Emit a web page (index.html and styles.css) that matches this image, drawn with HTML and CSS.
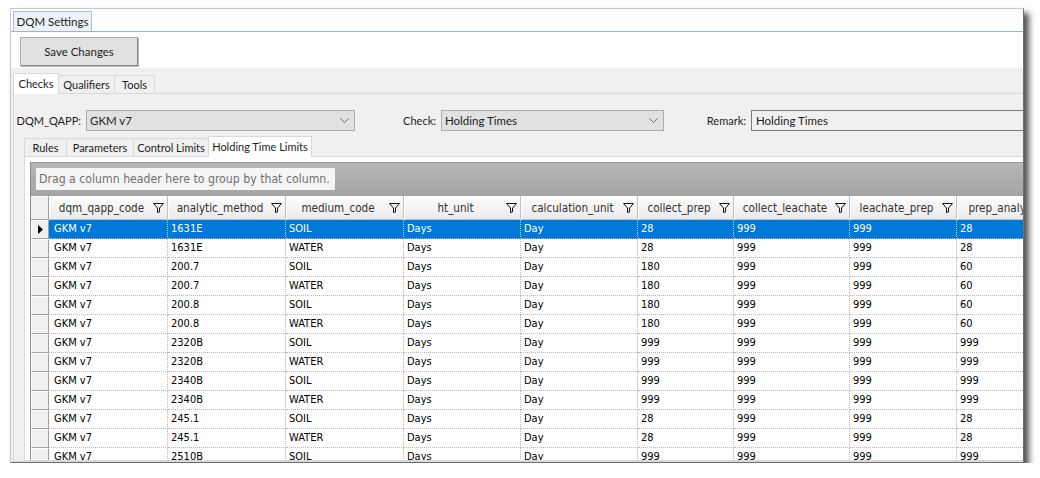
FILE: index.html
```html
<!DOCTYPE html>
<html>
<head>
<meta charset="utf-8">
<link rel="stylesheet" href="styles.css">
</head>
<body>
<div class="window">
  <div class="doc-strip"><div class="doc-tab">DQM Settings</div></div>
  <div class="toolbar"><button class="btn">Save Changes</button></div>
  <div class="main">
    <div class="tabs outer-tabs">
      <div class="tab sel w-checks">Checks</div>
      <div class="tab w-qual">Qualifiers</div>
      <div class="tab w-tools">Tools</div>
    </div>
    <div class="panel">
      <div class="filters">
        <div class="lbl lbl1">DQM_QAPP:</div>
        <div class="combo combo1"><span>GKM v7</span><svg width="9" height="5" viewBox="0 0 9 5"><path d="M0.5 0.5l4 4 4-4" fill="none" stroke="#6a6a6a"/></svg></div>
        <div class="lbl lbl2">Check:</div>
        <div class="combo combo2"><span>Holding Times</span><svg width="9" height="5" viewBox="0 0 9 5"><path d="M0.5 0.5l4 4 4-4" fill="none" stroke="#6a6a6a"/></svg></div>
        <div class="lbl lbl3">Remark:</div>
        <div class="textbox">Holding Times</div>
      </div>
      <div class="tabs inner-tabs">
        <div class="tab w-rules">Rules</div>
        <div class="tab w-params">Parameters</div>
        <div class="tab w-ctrl">Control Limits</div>
        <div class="tab sel w-hold">Holding Time Limits</div>
      </div>
      <div class="inner-panel">
        <div class="grid">
          <div class="group-band"><div class="group-box">Drag a column header here to group by that column.</div></div>
          <div class="row head">
            <div class="hc ind"></div>
            <div class="hc"><span>dqm_qapp_code</span><svg class="flt" width="11" height="11" viewBox="0 0 11 11"><path d="M0.5 1.5h10l-4 4.5v4l-2 0.5v-4.5z" fill="none" stroke="#111"/></svg></div>
            <div class="hc"><span>analytic_method</span><svg class="flt" width="11" height="11" viewBox="0 0 11 11"><path d="M0.5 1.5h10l-4 4.5v4l-2 0.5v-4.5z" fill="none" stroke="#111"/></svg></div>
            <div class="hc"><span>medium_code</span><svg class="flt" width="11" height="11" viewBox="0 0 11 11"><path d="M0.5 1.5h10l-4 4.5v4l-2 0.5v-4.5z" fill="none" stroke="#111"/></svg></div>
            <div class="hc"><span>ht_unit</span><svg class="flt" width="11" height="11" viewBox="0 0 11 11"><path d="M0.5 1.5h10l-4 4.5v4l-2 0.5v-4.5z" fill="none" stroke="#111"/></svg></div>
            <div class="hc"><span>calculation_unit</span><svg class="flt" width="11" height="11" viewBox="0 0 11 11"><path d="M0.5 1.5h10l-4 4.5v4l-2 0.5v-4.5z" fill="none" stroke="#111"/></svg></div>
            <div class="hc"><span>collect_prep</span><svg class="flt" width="11" height="11" viewBox="0 0 11 11"><path d="M0.5 1.5h10l-4 4.5v4l-2 0.5v-4.5z" fill="none" stroke="#111"/></svg></div>
            <div class="hc"><span>collect_leachate</span><svg class="flt" width="11" height="11" viewBox="0 0 11 11"><path d="M0.5 1.5h10l-4 4.5v4l-2 0.5v-4.5z" fill="none" stroke="#111"/></svg></div>
            <div class="hc"><span>leachate_prep</span><svg class="flt" width="11" height="11" viewBox="0 0 11 11"><path d="M0.5 1.5h10l-4 4.5v4l-2 0.5v-4.5z" fill="none" stroke="#111"/></svg></div>
            <div class="hc"><span>prep_analysis</span><svg class="flt" width="11" height="11" viewBox="0 0 11 11"><path d="M0.5 1.5h10l-4 4.5v4l-2 0.5v-4.5z" fill="none" stroke="#111"/></svg></div>
          </div>
          <div class="row sel"><div class="ind"><svg width="5" height="9" viewBox="0 0 5 9"><path d="M0 0L5 4.5L0 9z" fill="#000"/></svg></div><div class="c first">GKM v7</div><div class="c">1631E</div><div class="c">SOIL</div><div class="c">Days</div><div class="c">Day</div><div class="c">28</div><div class="c">999</div><div class="c">999</div><div class="c">28</div></div>
          <div class="row"><div class="ind"></div><div class="c first">GKM v7</div><div class="c">1631E</div><div class="c">WATER</div><div class="c">Days</div><div class="c">Day</div><div class="c">28</div><div class="c">999</div><div class="c">999</div><div class="c">28</div></div>
          <div class="row"><div class="ind"></div><div class="c first">GKM v7</div><div class="c">200.7</div><div class="c">SOIL</div><div class="c">Days</div><div class="c">Day</div><div class="c">180</div><div class="c">999</div><div class="c">999</div><div class="c">60</div></div>
          <div class="row"><div class="ind"></div><div class="c first">GKM v7</div><div class="c">200.7</div><div class="c">WATER</div><div class="c">Days</div><div class="c">Day</div><div class="c">180</div><div class="c">999</div><div class="c">999</div><div class="c">60</div></div>
          <div class="row"><div class="ind"></div><div class="c first">GKM v7</div><div class="c">200.8</div><div class="c">SOIL</div><div class="c">Days</div><div class="c">Day</div><div class="c">180</div><div class="c">999</div><div class="c">999</div><div class="c">60</div></div>
          <div class="row"><div class="ind"></div><div class="c first">GKM v7</div><div class="c">200.8</div><div class="c">WATER</div><div class="c">Days</div><div class="c">Day</div><div class="c">180</div><div class="c">999</div><div class="c">999</div><div class="c">60</div></div>
          <div class="row"><div class="ind"></div><div class="c first">GKM v7</div><div class="c">2320B</div><div class="c">SOIL</div><div class="c">Days</div><div class="c">Day</div><div class="c">999</div><div class="c">999</div><div class="c">999</div><div class="c">999</div></div>
          <div class="row"><div class="ind"></div><div class="c first">GKM v7</div><div class="c">2320B</div><div class="c">WATER</div><div class="c">Days</div><div class="c">Day</div><div class="c">999</div><div class="c">999</div><div class="c">999</div><div class="c">999</div></div>
          <div class="row"><div class="ind"></div><div class="c first">GKM v7</div><div class="c">2340B</div><div class="c">SOIL</div><div class="c">Days</div><div class="c">Day</div><div class="c">999</div><div class="c">999</div><div class="c">999</div><div class="c">999</div></div>
          <div class="row"><div class="ind"></div><div class="c first">GKM v7</div><div class="c">2340B</div><div class="c">WATER</div><div class="c">Days</div><div class="c">Day</div><div class="c">999</div><div class="c">999</div><div class="c">999</div><div class="c">999</div></div>
          <div class="row"><div class="ind"></div><div class="c first">GKM v7</div><div class="c">245.1</div><div class="c">SOIL</div><div class="c">Days</div><div class="c">Day</div><div class="c">28</div><div class="c">999</div><div class="c">999</div><div class="c">28</div></div>
          <div class="row"><div class="ind"></div><div class="c first">GKM v7</div><div class="c">245.1</div><div class="c">WATER</div><div class="c">Days</div><div class="c">Day</div><div class="c">28</div><div class="c">999</div><div class="c">999</div><div class="c">28</div></div>
          <div class="row"><div class="ind"></div><div class="c first">GKM v7</div><div class="c">2510B</div><div class="c">SOIL</div><div class="c">Days</div><div class="c">Day</div><div class="c">999</div><div class="c">999</div><div class="c">999</div><div class="c">999</div></div>
        </div>
      </div>
    </div>
  </div>
</div>
</body>
</html>
```
FILE: styles.css
```css
* { box-sizing: border-box; }
body { margin: 0; background: #fff; }

.window {
  margin: 8px 0 0 10px;
  width: 1014px;
  height: 455px;
  border: 1px solid #c9c9c9;
  border-right-color: #6f6f6f;
  border-bottom-color: #6f6f6f;
  box-shadow: 5px 5px 6px rgba(0,0,0,0.68);
  overflow: hidden;
  display: flex;
  flex-direction: column;
  background: #f0f0f0;
  font-family: Lato, "Liberation Sans", sans-serif;
  font-size: 11px;
  color: #1e1e1e;
}

.doc-strip {
  flex: none;
  height: 23px;
  background: #fff;
  border-bottom: 1px solid #9bb2d2;
  display: flex;
  align-items: flex-end;
  padding-left: 2px;
}
.doc-tab {
  width: 79px;
  height: 20px;
  line-height: 19px;
  text-align: center;
  background: #eef2f8;
  border: 1px solid #a9bdd6;
  border-bottom: none;
  font-size: 11.5px;
}

.toolbar {
  flex: none;
  height: 36px;
  background: #fff;
  padding: 5px 0 0 9px;
}
.btn {
  width: 118px;
  height: 29px;
  background: #e1e1e1;
  border: 1px solid #adadad;
  border-right-color: #8d8d8d;
  border-bottom-color: #8d8d8d;
  box-shadow: 1px 1px 0 #b5b5b5;
  font: inherit;
  font-size: 11.5px;
  color: #1e1e1e;
  padding: 0;
}

.main {
  flex: 1;
  min-height: 0;
  display: flex;
  flex-direction: column;
  padding: 5px 0 0 2px;
}

.tabs {
  flex: none;
  display: flex;
  align-items: flex-end;
  height: 20px;
}
.tab {
  height: 18px;
  line-height: 17px;
  text-align: center;
  background: #f0f0f0;
  border: 1px solid #d9d9d9;
  border-bottom: none;
  margin-right: -1px;
  white-space: nowrap;
}
.tab.sel {
  height: 21px;
  line-height: 19px;
  margin-bottom: -1px;
  background: #fff;
  position: relative;
  z-index: 1;
}
.w-checks { width: 46px; }
.w-qual { width: 57px; }
.w-tools { width: 41px; }
.w-rules { width: 43px; }
.w-params { width: 68px; }
.w-ctrl { width: 76px; }
.w-hold { width: 104px; }

.panel {
  flex: 1;
  min-height: 0;
  width: 1100px;
  border: 1px solid #d9d9d9;
  background: #f0f0f0;
  display: flex;
  flex-direction: column;
  padding-left: 5px;
}

.filters {
  flex: none;
  margin-top: 15px;
  height: 22px;
  display: flex;
  align-items: center;
}
.lbl {
  flex: none;
  display: flex;
  justify-content: flex-end;
  white-space: nowrap;
  padding-right: 5px;
}
.lbl1 { width: 67px; }
.lbl2 { width: 86px; }
.lbl3 { width: 87px; }
.combo {
  flex: none;
  height: 21px;
  background: #e1e1e1;
  border: 1px solid #acacac;
  display: flex;
  align-items: center;
  justify-content: space-between;
  padding: 0 5px 0 3px;
  font-size: 11.5px;
}
.combo1 { width: 269px; }
.combo2 { width: 223px; }
.textbox {
  flex: none;
  width: 320px;
  height: 21px;
  line-height: 19px;
  background: #f0f0f0;
  border: 1px solid #7a7a7a;
  padding-left: 4px;
  font-size: 11.5px;
}

.inner-tabs { margin: 5px 0 0 5px; }

.inner-panel {
  flex: 1;
  min-height: 0;
  margin-left: 5px;
  background: #fff;
  border: 1px solid #d9d9d9;
  padding: 5px 0 0 5px;
  overflow: hidden;
}

.grid {
  border-left: 1px solid #8a8a8a;
  background: #fff;
  font-family: "DejaVu Sans Condensed", "DejaVu Sans", sans-serif;
  font-size: 11px;
}
.group-band {
  height: 34px;
  background: linear-gradient(#b6b6b6, #a4a4a4);
  border-top: 1px solid #9a9a9a;
  padding: 5px 0 0 5px;
}
.group-box {
  width: 299px;
  height: 22px;
  line-height: 22px;
  background: #f5f5f5;
  color: #707070;
  padding-left: 3px;
  font-size: 12.2px;
  white-space: nowrap;
}

.row {
  display: grid;
  grid-template-columns: 18px 119px 118px 118px 117px 117px 96px 116px 107px 108px;
  height: 19px;
}
.row.head { height: 24px; }

.hc {
  display: flex;
  align-items: center;
  background: linear-gradient(#fdfdfd, #eaeaea);
  border-right: 1px solid #b7c2cc;
  border-bottom: 1px solid #b7c2cc;
  border-left: 1px solid #fff;
  color: #333;
  font-size: 11.6px;
  white-space: nowrap;
}
.hc span { flex: 1; text-align: center; }
.hc .flt { flex: none; margin-right: 3px; }
.hc.ind { border-left: none; }

.ind {
  background: #f0f0f0;
  border-top: 1px solid #fff;
  border-left: 1px solid #fff;
  border-right: 1px solid #a0a0a0;
  border-bottom: 1px solid #a0a0a0;
  display: flex;
  align-items: center;
  justify-content: center;
}

.c {
  border-right: 1px dotted #b8b8b8;
  border-bottom: 1px dotted #b8b8b8;
  padding-left: 3px;
  line-height: 18px;
  color: #000;
  white-space: nowrap;
  overflow: hidden;
}
.c.first { padding-left: 5px; }
.row.sel .c {
  background: #0078d7;
  color: #fff;
  border-right-color: #bcd8f0;
}
```
